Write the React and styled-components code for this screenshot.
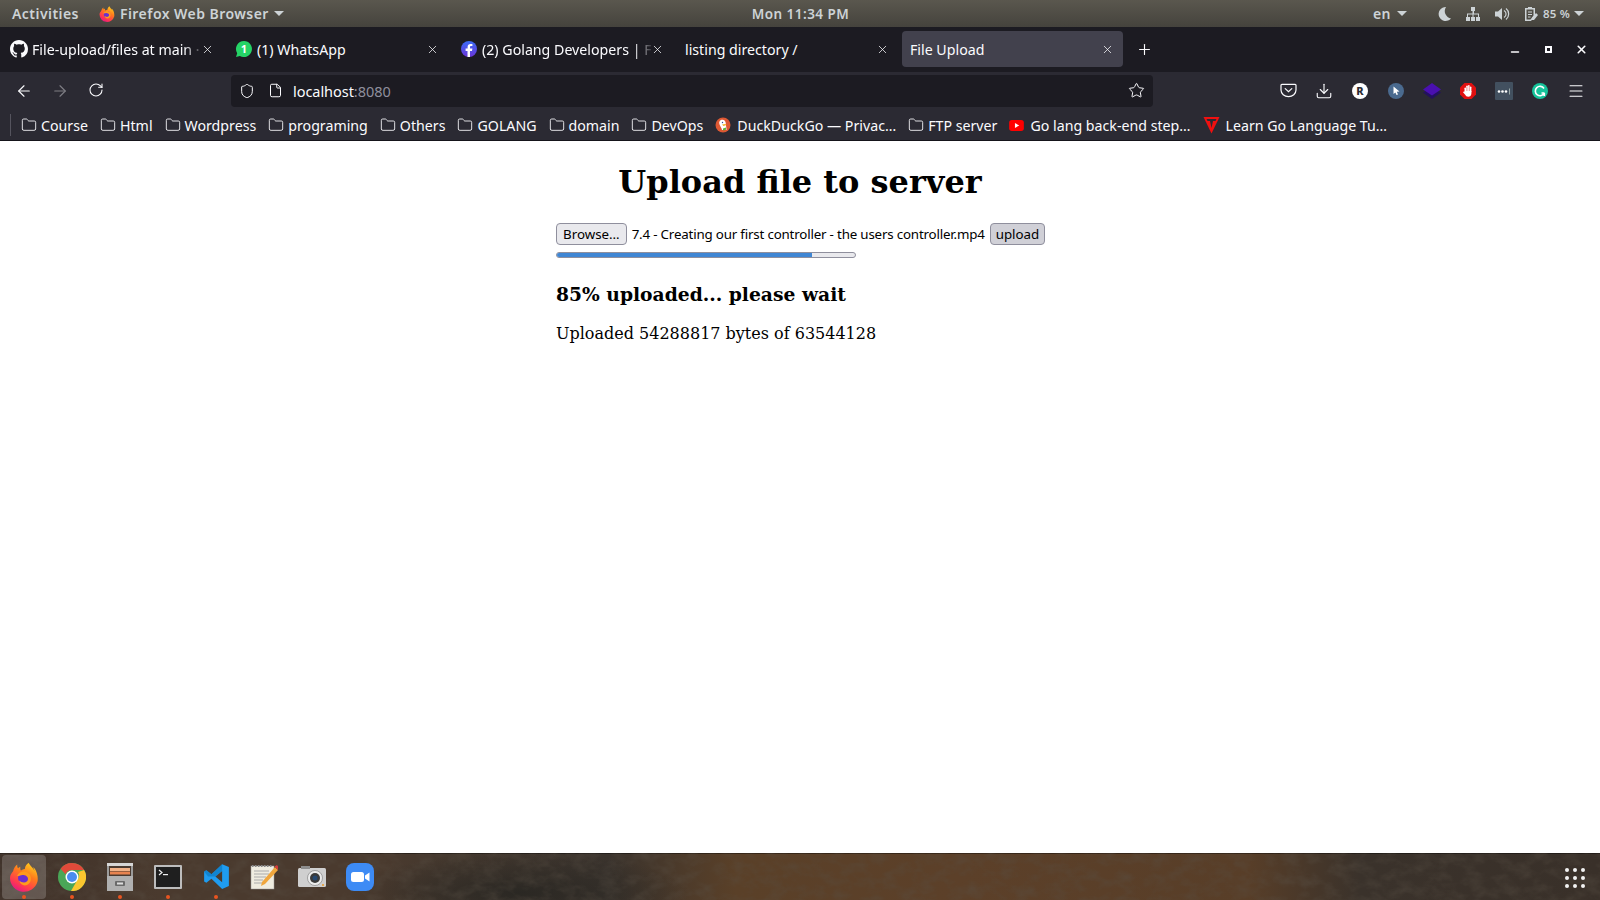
import React from "react";
import styled, { createGlobalStyle } from "styled-components";
import { ArrowLeft, ArrowRight, RotateCw, Shield, File, Star, Download, Menu, Plus, X, Folder, Minus } from "lucide-react";

const Global = createGlobalStyle`
  html, body { margin: 0; padding: 0; height: 100%; background: #fff; overflow: hidden; }
  #root { height: 100%; }
  * { box-sizing: border-box; }
`;
const UI = `"Noto Sans", "Open Sans", sans-serif`;

const Screen = styled.div`width: 1600px; height: 900px; display: flex; flex-direction: column; font-family: ${UI};`;

const TopBar = styled.header`
  height: 27px; flex: none; display: flex; align-items: center; justify-content: space-between; position: relative;
  padding: 0 16px 0 12px; color: #cdd3d6; font-size: 14px; font-weight: 600; letter-spacing: .45px;
  background: linear-gradient(#5a574e, #45433d);
`;
const TopGroup = styled.div`display: flex; align-items: center; gap: ${p => p.$gap || 8}px; margin-left: ${p => p.$offset || 0}px;`;
const Clock = styled.div`position: absolute; left: 1px; right: 0; text-align: center; pointer-events: none; font-size: 13.5px;`;
const Battery = styled.span`font-size: 11.5px; letter-spacing: .2px;`;
const Caret = styled.span`width: 0; height: 0; border-left: 5px solid transparent; border-right: 5px solid transparent; border-top: 5px solid #cdd3d6; display: inline-block;`;

const TabBar = styled.div`height: 45px; flex: none; background: #1c1b22; display: flex; align-items: center; padding: 0 2px 1px 2px; color: #fbfbfe;`;
const Tab = styled.div`
  width: 221px; height: 36px; margin-right: ${p => p.$active ? 0 : 4}px; border-radius: 4px; display: flex; align-items: center; padding: 0 9px 0 8px; gap: 4px;
  background: ${p => p.$active ? "#42414d" : "transparent"}; font-size: 14.2px; flex: none;
`;
const TabTitle = styled.span`
  flex: 1; overflow: hidden; white-space: nowrap; margin-right: -4px;
  ${p => p.$fade && `-webkit-mask-image: linear-gradient(to right, #000 90%, rgba(0,0,0,.15)); mask-image: linear-gradient(to right, #000 90%, rgba(0,0,0,.15));`}
`;
const Fav = styled.span`width: 18px; height: 18px; flex: none; display: flex; align-items: center; justify-content: center;`;
const NewTab = styled.div`width: 42px; display: flex; justify-content: center;`;
const WinControls = styled.div`margin-left: auto; display: flex; align-items: center; gap: 17px; padding-right: 9px;`;
const WinBtn = styled.span`width: 16px; height: 16px; display: flex; align-items: center; justify-content: center;`;
const RestoreIcon = styled.span`width: 7px; height: 7px; border: 2px solid #fbfbfe;`;

const NavBar = styled.div`height: 37px; flex: none; background: #2b2a33; display: flex; align-items: center; color: #fbfbfe;`;
const NavBtn = styled.span`width: 36px; display: flex; justify-content: center; opacity: ${p => p.$off ? .4 : 1}; flex: none;`;
const NavStart = styled.div`display: flex; margin-left: 6px; width: 225px; flex: none;`;
const UrlBar = styled.div`width: 922px; height: 32px; flex: none; background: #1c1b22; border-radius: 4px; display: flex; align-items: center; padding: 0 8px 0 2px; font-size: 14.5px;`;
const UrlIcon = styled.span`width: 28px; display: flex; justify-content: center; flex: none;`;
const Host = styled.span`flex: 1; margin-left: 4px; letter-spacing: -.05px;`;
const Port = styled.span`color: #8f8f9d;`;
const NavIcons = styled.div`display: flex; margin-left: 117px;`;
const ExtIcon = styled.span`width: 36px; display: flex; justify-content: center; align-items: center; flex: none;`;

const Bookmarks = styled.div`height: 32px; flex: none; background: #2b2a33; display: flex; align-items: center; padding: 1px 0 0 10px; color: #fbfbfe; font-size: 14.2px; border-bottom: 1px solid #15141a; white-space: nowrap;`;
const Sep = styled.span`width: 1px; height: 22px; background: #55545e; margin-right: 10px; flex: none;`;
const Mark = styled.span`display: flex; align-items: center; gap: ${p => p.$wide ? 6 : 4}px; margin-right: 12px; flex: none;`;

const Page = styled.main`flex: 1; background: #fff; display: flex; flex-direction: column; align-items: center; font-family: "DejaVu Serif", serif; color: #000;`;
const Title = styled.h1`font-size: 32px; font-weight: 700; margin: 20px 0 0; line-height: 42px; text-align: center;`;
const Panel = styled.div`width: 488px; margin-top: 20px;`;
const FileRow = styled.div`display: flex; align-items: center; height: 22px; font-family: ${UI}; font-size: 13.33px;`;
const Btn = styled.button`
  font: inherit; height: 22px; padding: 0 ${p => p.$wide ? 6 : 5}px; border: 1px solid #8f8f9d; border-radius: 4px; color: #000;
  background: ${p => p.$pressed ? "#d0d0d7" : "#e9e9ed"}; flex: none; white-space: nowrap;
`;
const FileName = styled.span`margin: 0 5px; white-space: nowrap; flex: none; letter-spacing: -.18px;`;
const Progress = styled.div`width: 300px; height: 6px; margin-top: 7px; border: 1px solid #8f8f9d; border-radius: 3px; background: #e9e9ed; overflow: hidden;`;
const Fill = styled.div`height: 100%; background: #3f86d4;`;
const Status = styled.h3`font-size: 18.72px; font-weight: 700; margin: 24px 0 0; line-height: 24px;`;
const Bytes = styled.p`font-size: 16px; margin: 18px 0 0; line-height: 20px;`;

const Dock = styled.footer`
  height: 47px; flex: none; position: relative; display: flex; align-items: center; overflow: hidden;
  background:
    radial-gradient(ellipse 170px 40px at 520px 40px, rgba(40,38,34,.9), transparent),
    linear-gradient(90deg, #3f3129 0, #4a3a2e 10%, #4a3a2e 24%, #44382e 28%, #3a332d 38%, #5a4028 46%, #5c4029 60%, #583e28 78%, #3a322b 85%, #393029 100%);
  box-shadow: inset 0 1px 0 rgba(0,0,0,.4);
`;
const Wallpaper = styled.svg`position: absolute; inset: 0; width: 100%; height: 100%; opacity: .45;`;
const DockItem = styled.div`
  width: 44px; height: 44px; margin: 0 2px; flex: none; position: relative; display: flex; align-items: center; justify-content: center; border-radius: 4px;
  background: ${p => p.$active ? "rgba(255,255,255,.18)" : "transparent"};
  ${p => p.$dot && `&::after { content: ""; position: absolute; width: 4px; height: 4px; border-radius: 50%; background: #e95420; bottom: 0; left: 20px; }`}
`;
const AppGrid = styled.div`position: absolute; right: 15px; top: 15px; display: grid; grid-template-columns: repeat(3, 4px); gap: 4px;`;
const GridDot = styled.span`width: 4px; height: 4px; border-radius: 50%; background: #f2f2f2;`;

const FolderI = () => <Folder size={16} strokeWidth={1.3} color="#fbfbfe" />;

const Github = () => <svg width="18" height="18" viewBox="0 0 16 16" fill="#fbfbfe"><path d="M8 0C3.58 0 0 3.58 0 8c0 3.54 2.29 6.53 5.47 7.59.4.07.55-.17.55-.38 0-.19-.01-.82-.01-1.49-2.01.37-2.53-.49-2.69-.94-.09-.23-.48-.94-.82-1.13-.28-.15-.68-.52-.01-.53.63-.01 1.08.58 1.23.82.72 1.21 1.87.87 2.33.66.07-.52.28-.87.51-1.07-1.78-.2-3.64-.89-3.64-3.95 0-.87.31-1.59.82-2.15-.08-.2-.36-1.02.08-2.12 0 0 .67-.21 2.2.82.64-.18 1.32-.27 2-.27s1.36.09 2 .27c1.53-1.04 2.2-.82 2.2-.82.44 1.1.16 1.92.08 2.12.51.56.82 1.27.82 2.15 0 3.07-1.87 3.75-3.65 3.95.29.25.54.73.54 1.48 0 1.07-.01 1.93-.01 2.2 0 .21.15.46.55.38A8.01 8.01 0 0 0 16 8c0-4.42-3.58-8-8-8z"/></svg>;
const WhatsApp = () => <svg width="18" height="18" viewBox="0 0 18 18"><path d="M9 1a8 8 0 0 0-6.800 12.200L1 17l3.900-1.100A8 8 0 1 0 9 1z" fill="#25d366"/><text x="9" y="13" textAnchor="middle" fontSize="11" fontWeight="700" fill="#fff" fontFamily="Noto Sans">1</text></svg>;
const Facebook = () => <svg width="18" height="18" viewBox="0 0 18 18"><defs><linearGradient id="fb" x1="0" y1="0" x2="0" y2="1"><stop offset="0" stopColor="#3b6cf5"/><stop offset="1" stopColor="#6a35d8"/></linearGradient></defs><circle cx="9" cy="9" r="8" fill="url(#fb)"/><path d="M10 17v-6h2l.4-2.400H10V7.200c0-.8.3-1.200 1.200-1.200h1.200V4c-.6-.1-1.200-.1-1.800-.1-1.900 0-3 1.100-3 3.100v1.600H5.600V11h1.900v6z" fill="#fff"/></svg>;
const Duck = () => <svg width="16" height="16" viewBox="0 0 16 16"><circle cx="8" cy="8" r="7.500" fill="#de5833"/><path d="M6 3c2.800-.8 4.800 1 4.800 3.500 0 1.500.7 4 .7 6.500H7c0-2-2.800-4.500-2.800-7 0-1 .6-2.500 1.800-3z" fill="#fff"/><path d="M7 7.500l3.500-.5 1 1-3 1z" fill="#f5b21b"/><path d="M8 11.500l3-1v2.300l-3 .7z" fill="#5cb338"/><circle cx="7.500" cy="5.500" r=".7" fill="#2d4f8e"/></svg>;
const YouTube = () => <svg width="15" height="11" viewBox="0 0 16 12"><rect width="16" height="12" rx="3" fill="#f00"/><path d="M6.300 3.300 11 6l-4.700 2.700z" fill="#fff"/></svg>;
const GoT = () => <svg width="17" height="18" viewBox="0 0 17 18"><path d="M.5 1h16L8.500 17.500z" fill="#f01010"/><path d="M3.500 3h10l-1 2H10L8.500 12 7 5H4.500z" fill="#2b2a33"/></svg>;

const Pocket = () => <svg width="17" height="15" viewBox="0 0 18 16" fill="none" stroke="#fbfbfe" strokeWidth="1.3"><path d="M2 1.500h14a1 1 0 0 1 1 1v5a8 7 0 0 1-16 0v-5a1 1 0 0 1 1-1z"/><path d="M5.500 6 9 9.300 12.500 6" strokeLinecap="round"/></svg>;
const RExt = () => <svg width="18" height="18" viewBox="0 0 18 18"><circle cx="9" cy="9" r="8" fill="#fff"/><text x="9" y="12.800" textAnchor="middle" fontSize="11" fontWeight="800" fill="#2b2a33" fontFamily="Noto Sans">R</text></svg>;
const CursorExt = () => <svg width="18" height="18" viewBox="0 0 18 18"><circle cx="9" cy="9" r="8" fill="#4a6a8f"/><path d="M6.500 4.500 12.500 9.500 9.800 9.700 11 12.500 9.500 13 8.400 10.400 6.500 12z" fill="#fff"/></svg>;
const Layers = () => <svg width="18" height="18" viewBox="0 0 18 18"><path d="M0 10.500 9 6l9 4.500L9 17z" fill="#23115f"/><path d="M0 7.500 9 1l9 6.500L9 13.500z" fill="#4a10b0"/></svg>;
const Stop = () => <svg width="18" height="18" viewBox="0 0 18 18"><path d="M5.500 1h7L17 5.500v7L12.500 17h-7L1 12.500v-7z" fill="#e01010"/><g fill="#fff"><rect x="5.500" y="5.500" width="1.500" height="6" rx=".7"/><rect x="7.300" y="3.500" width="1.500" height="7" rx=".7"/><rect x="9.100" y="3" width="1.500" height="7.500" rx=".7"/><rect x="10.900" y="4.500" width="1.500" height="6" rx=".7"/><path d="M5.500 9h6.900v2.500c0 2-1.400 3.300-3.200 3.300-1.500 0-2.400-.8-3-2L4 10.300l.8-.8 1 .8z"/></g></svg>;
const Dots = () => <svg width="18" height="18" viewBox="0 0 18 18"><rect width="18" height="18" rx="1" fill="#42505f"/><circle cx="4" cy="9.500" r="1.300" fill="#fff"/><circle cx="7.500" cy="9.500" r="1.300" fill="#fff"/><circle cx="11" cy="9.500" r="1.300" fill="#fff"/><rect x="14" y="6.500" width="1" height="6" fill="#9aa"/></svg>;
const Grammarly = () => <svg width="18" height="18" viewBox="0 0 18 18"><circle cx="9" cy="9" r="8" fill="#15c39a"/><path d="M13 6.500A4.700 4.700 0 1 0 13.300 11M13.500 11H10.500M13.300 11V14" fill="none" stroke="#fff" strokeWidth="1.600"/></svg>;

const Firefox = ({ size = 18 }) => <svg width={size} height={size} viewBox="3 3 30 30">
  <defs>
    <linearGradient id={`ffa${size}`} x1=".8" y1="0" x2=".25" y2="1"><stop offset="0" stopColor="#ffd51f"/><stop offset=".4" stopColor="#ff7a1c"/><stop offset=".75" stopColor="#ff3a50"/><stop offset="1" stopColor="#e31587"/></linearGradient>
  </defs>
  <path d="M30 12c-.6-1.600-2-3.300-3-3.900.9 1.600 1.300 3 1.500 4-1.200-3-3.300-4.200-5-6.800-.1-.1-.2-.3-.3-.5l-.2-.4c-.1-.2-.2-.4-.2-.7-1.800 1-3.700 3-4 6.200-1.400.1-2.700.6-3.800 1.500-.1-.1-.3-.2-.4-.3-.4-1-.4-2.500-.3-3.400-1 .5-1.800 1.200-2.200 1.600-1-.8-.9-3-.9-3.700-2.300 2-3.800 4.500-4 6.500C5.500 14.500 4 16 4 19a14 14 0 0 0 27.500 3.500c.7-4-.2-7.500-1.500-10.500z" fill={`url(#ffa${size})`} />
  <circle cx="18" cy="19" r="6" fill="#6b2fd0" />
  <path d="M11 17c2 .5 3.500-1 5.500-1 3 0 5.500 1.500 5.500 4 0 2-2 3.500-4 3.500-2 0-3.500-.8-5-2 1 3.500 4.500 6 8 4.500 3-1.300 4.300-4.500 3.800-7.800-.5-2.800-2.800-5.200-5.800-5.700-3.500-.5-6.500 1-8 4.500z" fill="#ff9a1c"/>
</svg>;
const Chrome = () => <svg width="28" height="28" viewBox="0 0 28 28">
  <circle cx="14" cy="14" r="14" fill="#4aa657"/>
  <path d="M14 0a14 14 0 0 1 12.100 7H14a7 7 0 0 0-6.500 4.300L2.600 5.800A14 14 0 0 1 14 0z" fill="#e04a3a"/>
  <path d="M26.100 7A14 14 0 0 1 13 28l6-10.500A7 7 0 0 0 20 9z" fill="#fbc62f" />
  <circle cx="14" cy="14" r="6.500" fill="#fff"/><circle cx="14" cy="14" r="5" fill="#4a8cf0"/>
</svg>;
const Files = () => <svg width="28" height="30" viewBox="0 0 28 30">
  <rect x="1" y="1" width="26" height="28" rx="1.500" fill="#9b9b9b"/>
  <rect x="1" y="1" width="26" height="3" fill="#d6d6d6"/>
  <rect x="3" y="4" width="22" height="10" fill="#4a3a30"/>
  <rect x="4" y="6" width="20" height="3" fill="#f1b288"/><rect x="4" y="9.500" width="20" height="3" fill="#e8834f"/>
  <rect x="1" y="14" width="26" height="15" fill="#b0b0b0"/>
  <rect x="9" y="19" width="10" height="5" rx="1" fill="#6a6a6a"/><rect x="11" y="20.500" width="6" height="2" fill="#ddd"/>
</svg>;
const Terminal = () => <svg width="28" height="24" viewBox="0 0 28 24">
  <rect width="28" height="24" rx="1" fill="#bdbdbd"/><rect x="2" y="2" width="24" height="20" fill="#1f1f1f"/>
  <path d="M5 5l3 2.500L5 10" stroke="#eee" strokeWidth="1.200" fill="none"/><rect x="9" y="9" width="5" height="1.200" fill="#eee"/>
</svg>;
const VSCode = () => <svg width="27" height="27" viewBox="0 0 24 24">
  <path d="M17 1 7.500 10 3 6.500 1 7.500v9l2 1L7.500 14 17 23l6-2.500v-17zM17 7v10l-6-5z" fill="#1f9cf0"/>
  <path d="M17 1 7.500 10 3 6.500 1 7.500 4.500 12 11 12 17 7z" fill="#0a7ac2" opacity=".7"/>
</svg>;
const Notes = () => <svg width="28" height="28" viewBox="0 0 28 28">
  <rect x="1" y="3" width="23" height="23" fill="#efece0" stroke="#999" strokeWidth=".5"/>
  <path d="M2 3h21" stroke="#888" strokeWidth="2" strokeDasharray="1.500 1.500"/>
  <path d="M4 8h15M4 11h15M4 14h12M4 17h9M4 20h8" stroke="#aaa" strokeWidth="1"/>
  <path d="M25 4 12 19l-1 4 4-2L28 7z" fill="#f0a63c"/><path d="M24.500 3.500l3.500 3.500 1-2-2-3z" fill="#d63b3b"/>
</svg>;
const Camera = () => <svg width="28" height="24" viewBox="0 0 28 24">
  <rect x="0" y="3" width="28" height="19" rx="1.500" fill="#cfcfcf"/><rect x="3" y="1" width="9" height="3" fill="#8e8e8e"/>
  <circle cx="17" cy="13" r="7.500" fill="#ececec" stroke="#777" strokeWidth=".6"/><circle cx="17" cy="13" r="5" fill="#3a3a3a"/><circle cx="17" cy="13" r="2.500" fill="#26486f"/>
  <circle cx="25" cy="20" r="1" fill="#e89a2a"/>
</svg>;
const Zoom = () => <svg width="28" height="28" viewBox="0 0 28 28">
  <rect width="28" height="28" rx="8" fill="#3d8bf5"/><rect x="5" y="9" width="13" height="10" rx="2.500" fill="#fff"/><path d="M19 12.500 23.500 9.500v9L19 15.500z" fill="#fff"/>
</svg>;

const TopSvg = ({ children, w = 16, h = 16 }) => <svg width={w} height={h} viewBox={`0 0 ${w} ${h}`} fill="#cdd3d6">{children}</svg>;

const tabs = [
  { icon: <Github />, title: "File-upload/files at main ·", fade: 1 },
  { icon: <WhatsApp />, title: "(1) WhatsApp" },
  { icon: <Facebook />, title: "(2) Golang Developers | F", fade: 1 },
  { title: "listing directory /" },
  { title: "File Upload", active: 1 },
];
const marks = [
  [<FolderI />, "Course"], [<FolderI />, "Html"], [<FolderI />, "Wordpress"], [<FolderI />, "programing"], [<FolderI />, "Others"], [<FolderI />, "GOLANG"], [<FolderI />, "domain"], [<FolderI />, "DevOps"],
  [<Duck />, "DuckDuckGo — Privac…", 1], [<FolderI />, "FTP server"], [<YouTube />, "Go lang back-end step…", 1], [<GoT />, "Learn Go Language Tu…", 1],
];
const dock = [
  [<Firefox size={30} />, 1, 1], [<Chrome />, 0, 1], [<Files />, 0, 1], [<Terminal />, 0, 1], [<VSCode />, 0, 1], [<Notes />], [<Camera />], [<Zoom />],
];
const UPLOADED = 54288817;
const TOTAL = 63544128;

export default function App() {
  return (
    <Screen>
      <Global />
      <TopBar>
        <TopGroup $gap={20}>
          <span>Activities</span>
          <TopGroup $gap={5}><Firefox size={16} /><span>Firefox Web Browser</span><Caret /></TopGroup>
        </TopGroup>
        <Clock>Mon 11:34 PM</Clock>
        <TopGroup $gap={15}>
          <TopGroup $gap={6}><span>en</span><Caret /></TopGroup>
          <TopGroup $gap={13} $offset={14}>
            <TopSvg><path d="M10 1a7 7 0 1 0 5 11.500A7.500 7.500 0 0 1 10 1z" /></TopSvg>
            <TopSvg><path d="M6 1h4v4H9v2.500h5V11h1v4h-4v-4h2V8.500H8.500V11H10v4H6v-4h1.500V8.500H3V11h2v4H1v-4h1V7.500h5.500V5H6z" /></TopSvg>
            <TopSvg><path d="M1 5.500h3L8 2v12l-4-3.500H1z" /><path d="M10 4.500a4 4 0 0 1 0 7M12 2.500a7 7 0 0 1 0 11" fill="none" stroke="#cdd3d6" strokeWidth="1.200" /></TopSvg>
            <TopGroup $gap={4}>
              <TopSvg><path fillRule="evenodd" d="M5 1h4v1h3v8l-4 5H2V2h3zM3.500 3.500v10H7.500L10.500 9.500V3.500zM5 5.500h4v1H5zM5 8h4v1H5zM5 10.500h2.500v1H5z" /><path d="M13 7l2 2-4 5H9v-2z" /></TopSvg>
              <Battery>85 %</Battery><Caret />
            </TopGroup>
          </TopGroup>
        </TopGroup>
      </TopBar>

      <TabBar>
        {tabs.map(t => (
          <Tab key={t.title} $active={t.active}>
            {t.icon && <Fav>{t.icon}</Fav>}
            <TabTitle $fade={t.fade}>{t.title}</TabTitle>
            <X size={13} strokeWidth={1.4} color="#fbfbfe" />
          </Tab>
        ))}
        <NewTab><Plus size={17} strokeWidth={1.6} color="#fbfbfe" /></NewTab>
        <WinControls>
          <WinBtn><Minus size={12} strokeWidth={3} color="#fbfbfe" style={{ marginTop: 5 }} /></WinBtn>
          <WinBtn><RestoreIcon /></WinBtn>
          <WinBtn><X size={13} strokeWidth={3} color="#fbfbfe" /></WinBtn>
        </WinControls>
      </TabBar>

      <NavBar>
        <NavStart>
          <NavBtn><ArrowLeft size={18} strokeWidth={1.5} /></NavBtn>
          <NavBtn $off><ArrowRight size={18} strokeWidth={1.5} /></NavBtn>
          <NavBtn><RotateCw size={16} strokeWidth={1.6} /></NavBtn>
        </NavStart>
        <UrlBar>
          <UrlIcon><Shield size={16} strokeWidth={1.5} /></UrlIcon>
          <UrlIcon><File size={15} strokeWidth={1.6} /></UrlIcon>
          <Host>localhost<Port>:8080</Port></Host>
          <Star size={17} strokeWidth={1.4} />
        </UrlBar>
        <NavIcons>
          <ExtIcon><Pocket /></ExtIcon>
          <ExtIcon><Download size={18} strokeWidth={1.5} /></ExtIcon>
          <ExtIcon><RExt /></ExtIcon>
          <ExtIcon><CursorExt /></ExtIcon>
          <ExtIcon><Layers /></ExtIcon>
          <ExtIcon><Stop /></ExtIcon>
          <ExtIcon><Dots /></ExtIcon>
          <ExtIcon><Grammarly /></ExtIcon>
          <ExtIcon><Menu size={18} strokeWidth={1.4} /></ExtIcon>
        </NavIcons>
      </NavBar>

      <Bookmarks>
        <Sep />
        {marks.map(([icon, label, wide]) => <Mark key={label} $wide={wide}>{icon}<span>{label}</span></Mark>)}
      </Bookmarks>

      <Page>
        <Title>Upload file to server</Title>
        <Panel>
          <FileRow>
            <Btn $wide>Browse…</Btn>
            <FileName>7.4 - Creating our first controller - the users controller.mp4</FileName>
            <Btn $pressed>upload</Btn>
          </FileRow>
          <Progress><Fill style={{ width: `${(UPLOADED / TOTAL) * 100}%` }} /></Progress>
          <Status>85% uploaded... please wait</Status>
          <Bytes>Uploaded {UPLOADED} bytes of {TOTAL}</Bytes>
        </Panel>
      </Page>

      <Dock>
        <Wallpaper aria-hidden="true">
          <filter id="rough"><feTurbulence type="fractalNoise" baseFrequency=".06 .09" numOctaves="4" seed="7" /><feColorMatrix values="0 0 0 0 .1  0 0 0 0 .08  0 0 0 0 .06  1.800 0 0 0 -.7" /></filter>
          <rect width="100%" height="100%" filter="url(#rough)" />
        </Wallpaper>
        {dock.map(([icon, active, dot], i) => <DockItem key={i} $active={active} $dot={dot}>{icon}</DockItem>)}
        <AppGrid>{Array.from({ length: 9 }, (_, i) => <GridDot key={i} />)}</AppGrid>
      </Dock>
    </Screen>
  );
}
